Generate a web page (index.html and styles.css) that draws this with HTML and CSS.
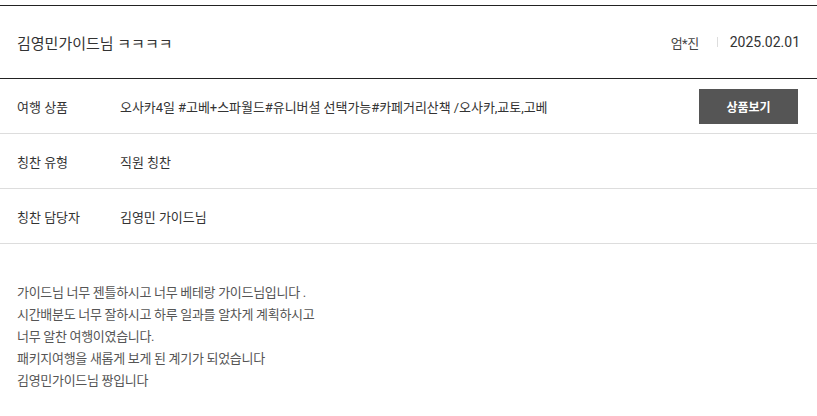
FILE: index.html
```html
<!DOCTYPE html>
<html lang="ko">
<head>
<meta charset="utf-8">
<link rel="stylesheet" href="styles.css">
</head>
<body>
<div class="review">
  <div class="review-head">
    <h2 class="review-title">김영민가이드님 ㅋㅋㅋㅋ</h2>
    <div class="review-meta">
      <span class="writer">엄*진</span>
      <span class="sep"></span>
      <span class="date">2025.02.01</span>
    </div>
  </div>
  <div class="info-row">
    <div class="info-label">여행 상품</div>
    <div class="info-value">오사카4일 #고베+스파월드#유니버셜 선택가능#카페거리산책 /오사카,교토,고베</div>
    <a class="btn-product">상품보기</a>
  </div>
  <div class="info-row">
    <div class="info-label">칭찬 유형</div>
    <div class="info-value">직원 칭찬</div>
  </div>
  <div class="info-row">
    <div class="info-label">칭찬 담당자</div>
    <div class="info-value">김영민 가이드님</div>
  </div>
  <div class="review-body">
    <p>가이드님 너무 젠틀하시고 너무 베테랑 가이드님입니다 .</p>
    <p>시간배분도 너무 잘하시고 하루 일과를 알차게 계획하시고</p>
    <p>너무 알찬 여행이였습니다.</p>
    <p>패키지여행을 새롭게 보게 된 계기가 되었습니다</p>
    <p>김영민가이드님 짱입니다</p>
  </div>
</div>
</body>
</html>
```
FILE: styles.css
```css
html, body {
  margin: 0;
  padding: 0;
  background: #fff;
}
body {
  padding-top: 5px;
  font-family: Roboto, "Noto Sans CJK KR", sans-serif;
  color: #333;
}
.review {
  border-top: 1px solid #222;
}
.review-head {
  display: flex;
  align-items: center;
  justify-content: space-between;
  height: 72px;
  padding: 0 17px;
  border-bottom: 1px solid #222;
}
.review-title {
  margin: 0;
  font-size: 15px;
  font-weight: 400;
  color: #333;
}
.review-meta {
  display: flex;
  align-items: center;
  font-size: 14px;
  color: #333;
}
.writer {
  font-size: 13px;
  letter-spacing: -0.5px;
  color: #444;
}
.sep {
  width: 1px;
  height: 10px;
  background: #ddd;
  margin: 0 12px 0 18px;
}
.info-row {
  display: flex;
  align-items: center;
  height: 54px;
  padding: 0 19px 0 17px;
  border-bottom: 1px solid #ddd;
  font-size: 13px;
}
.info-label {
  width: 103px;
  flex: none;
  color: #333;
}
.info-value {
  flex: 1;
  color: #333;
  letter-spacing: -0.05px;
}
.btn-product {
  display: flex;
  align-items: center;
  justify-content: center;
  width: 99px;
  height: 35px;
  background: #555;
  color: #fff;
  font-size: 12px;
  font-weight: 700;
}
.review-body {
  padding: 38px 17px 20px;
  font-size: 13px;
  line-height: 22px;
  color: #555;
  letter-spacing: -0.3px;
}
.review-body p {
  margin: 0;
}
```
